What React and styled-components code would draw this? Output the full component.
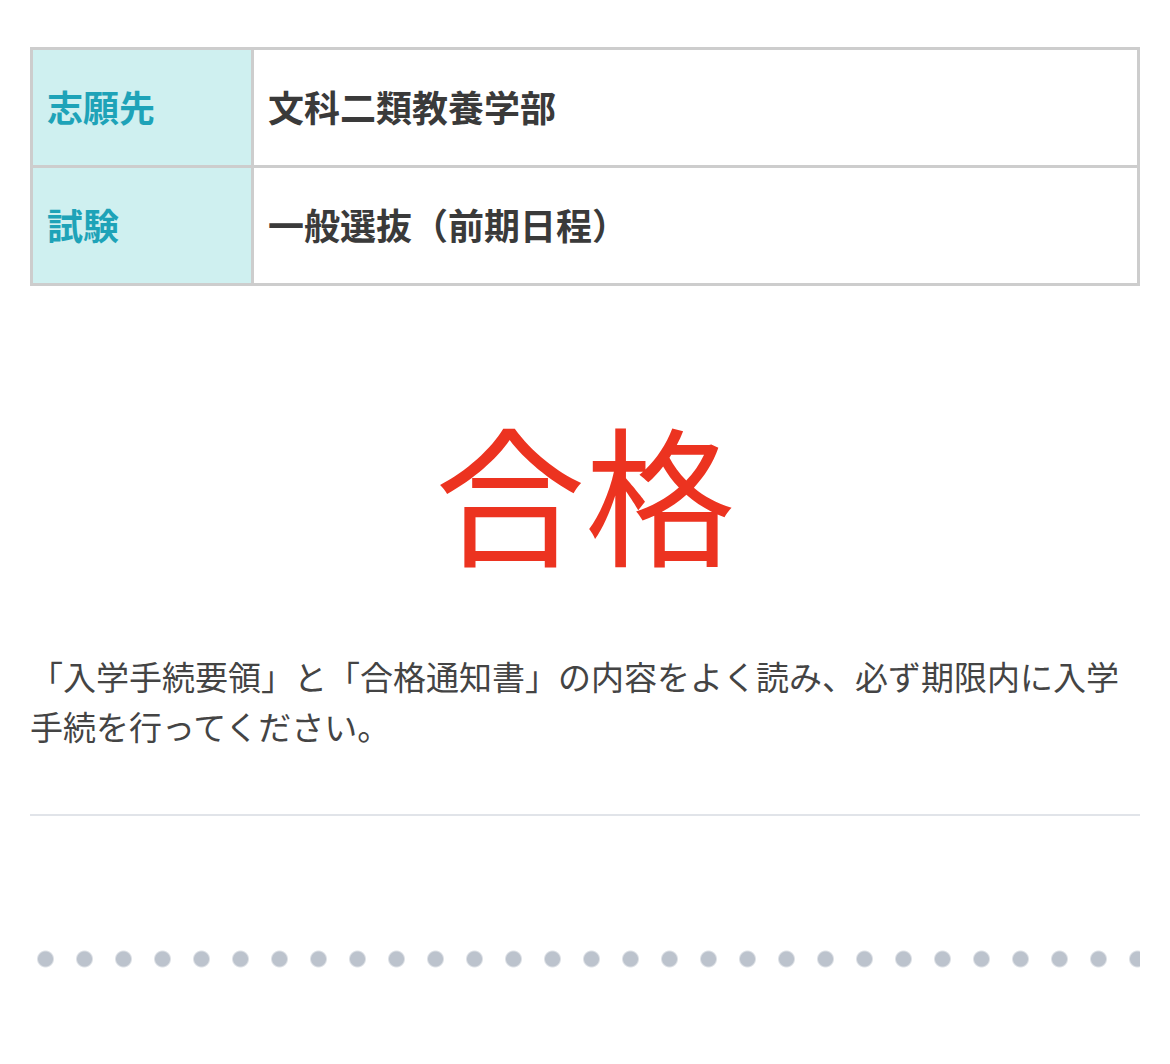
import React from "react";
import styled, { createGlobalStyle } from "styled-components";

const Global = createGlobalStyle`
  html, body { margin: 0; padding: 0; background: #ffffff; }
  body { font-family: "Noto Sans CJK JP", "Noto Sans", sans-serif; }
`;

const Page = styled.div`
  width: 1110px;
  padding: 47px 30px 0;
`;

const InfoTable = styled.div`
  display: grid;
  grid-template-columns: 221px 1fr;
  border-top: 3px solid #cdcdcd;
  border-left: 3px solid #cdcdcd;
`;

const Cell = styled.div`
  box-sizing: border-box;
  height: 118px;
  display: flex;
  align-items: center;
  padding: 0 0 3px 14px;
  border-right: 3px solid #cdcdcd;
  border-bottom: 3px solid #cdcdcd;
  font-size: 36px;
  font-weight: 700;
  background: ${(p) => (p.$head ? "#cff0f0" : "#ffffff")};
  color: ${(p) => (p.$head ? "#1ea3b8" : "#3a3a3a")};
`;

const Result = styled.div`
  margin-top: 129px;
  text-align: center;
  font-size: 150px;
  line-height: 1;
  font-weight: 400;
  color: #ec3320;
`;

const Notice = styled.p`
  margin: 86px 0 0;
  font-size: 33px;
  line-height: 50px;
  color: #444444;
  font-weight: 400;
`;

const Rule = styled.hr`
  margin: 63px 0 0;
  border: 0;
  height: 2px;
  background: #e1e4e9;
`;

const Dots = styled.div`
  margin-top: 133px;
  height: 20px;
  background-image: radial-gradient(circle, #bcc3cd 7px, rgba(188, 195, 205, 0) 9px);
  background-size: 39px 20px;
  background-repeat: repeat-x;
  background-position: -4px center;
`;

const rows = [
  ["志願先", "文科二類教養学部"],
  ["試験", "一般選抜（前期日程）"],
];

export default function App() {
  return (
    <>
      <Global />
      <Page lang="ja">
        <InfoTable>
          {rows.map(([k, v]) => (
            <React.Fragment key={k}>
              <Cell $head>{k}</Cell>
              <Cell>{v}</Cell>
            </React.Fragment>
          ))}
        </InfoTable>
        <Result>合格</Result>
        <Notice>
          「入学手続要領」と「合格通知書」の内容をよく読み、必ず期限内に入学手続を行ってください。
        </Notice>
        <Rule />
        <Dots />
      </Page>
    </>
  );
}
